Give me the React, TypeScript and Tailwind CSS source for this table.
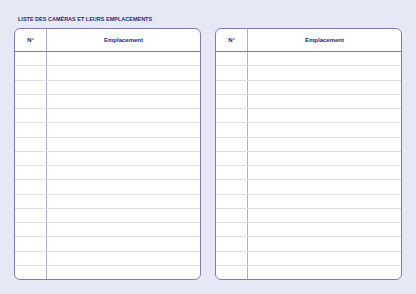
import React from "react";

const rows = Array.from({ length: 16 }, (_, i) => i);

const CameraTable = () => {
  return (
    <div className="flex h-[252px] flex-1 flex-col overflow-hidden rounded-[6px] border border-[#7f7bb9] bg-white">
      {/* Header */}
      <div className="grid h-[23px] shrink-0 grid-cols-[32px_1fr] border-b border-[#7f7bb9] text-[6px] font-bold text-[#2b2674]">
        <div className="flex items-center justify-center border-r border-[#aeabd6]">N°</div>
        <div className="flex items-center justify-center">Emplacement</div>
      </div>
      {/* Lignes */}
      <div className="flex flex-1 flex-col">
        {rows.map((r) => (
          <div
            key={r}
            className={
              "grid flex-1 grid-cols-[32px_1fr] " +
              (r < rows.length - 1 ? "border-b border-[#dcdcea]" : "")
            }
          >
            <div className="border-r border-[#aeabd6]" />
            <div />
          </div>
        ))}
      </div>
    </div>
  );
};

export default function App() {
  return (
    <div
      className="flex h-[294px] w-[416px] flex-col bg-[#e7e8f5] px-[14px] pt-[15px]"
      style={{ fontFamily: '"Liberation Sans", Arial, sans-serif' }}
    >
      <h1 className="ml-[4px] text-[5.5px] font-bold uppercase leading-[8px] text-[#2b2674]">
        Liste des caméras et leurs emplacements
      </h1>
      <div className="mt-[5px] flex gap-[14px]">
        <CameraTable />
        <CameraTable />
      </div>
    </div>
  );
}
